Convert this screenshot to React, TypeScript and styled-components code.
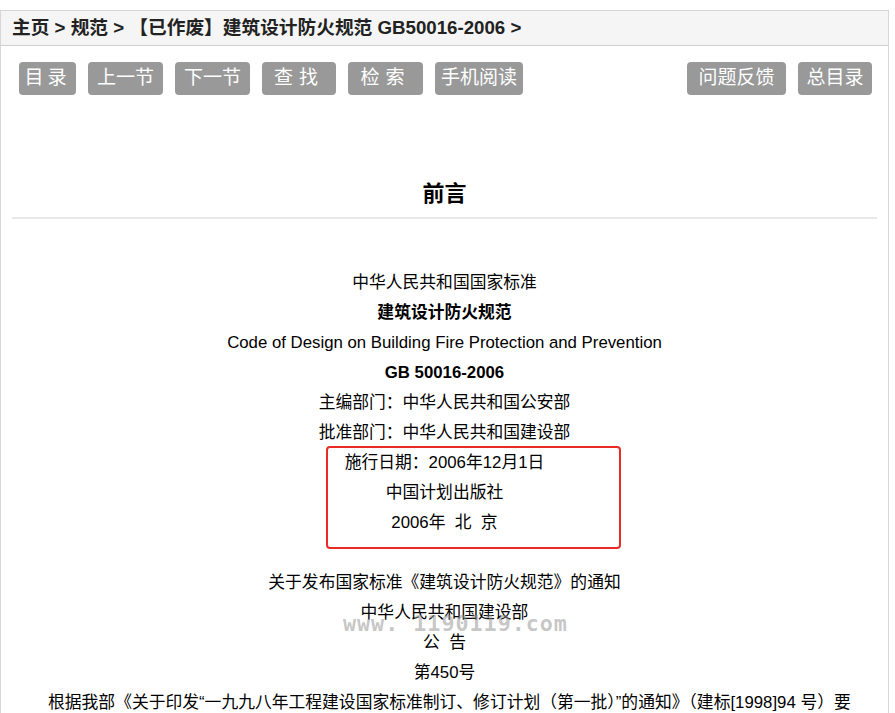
import React from "react";
import styled, { createGlobalStyle } from "styled-components";

const Global = createGlobalStyle`
  html, body { margin: 0; padding: 0; background: #fff; }
  body { font-family: "Liberation Sans", Arial, "Noto Sans CJK SC", sans-serif; color: #000; }
`;

const Page = styled.div`
  width: 887px;
  margin-top: 10px;
  border: 1px solid #d6d6d6;
  border-bottom: none;
  min-height: 710px;
  position: relative;
  overflow: hidden;
`;

const Crumbs = styled.div`
  height: 35px;
  box-sizing: border-box;
  background: #f5f5f5;
  border-bottom: 1px solid #d0d0d0;
  display: flex;
  align-items: center;
  padding: 0 0 0 11px;
  font-size: 18.7px;
  line-height: 20px;
  font-weight: bold;
  color: #222;
`;

const Toolbar = styled.div`
  display: flex;
  padding: 16px 16px 0 18px;
  gap: 12px;
`;

const Spacer = styled.div`
  flex: 1;
`;

const Btn = styled.span<{ $w: number; $ls?: number }>`
  width: ${(p) => p.$w}px;
  height: 33px;
  border-radius: 4px;
  background: #999;
  color: #fff;
  font-size: 19px;
  line-height: 20px;
  padding-bottom: 1px;
  display: flex;
  align-items: center;
  justify-content: center;
  letter-spacing: ${(p) => p.$ls ?? 0}px;
  box-sizing: border-box;
`;

const Title = styled.h1`
  margin: 84px 11px 0;
  text-align: center;
  font-size: 22px;
  font-weight: bold;
  line-height: 30px;
  padding-bottom: 8px;
  border-bottom: 2px solid #e8e8e8;
`;

const Body = styled.div`
  padding: 49px 15px 0;
  font-size: 16.8px;
  position: relative;
`;

const Line = styled.p<{ $bold?: boolean }>`
  margin: 0;
  line-height: 30px;
  text-align: center;
  font-weight: ${(p) => (p.$bold ? "bold" : "normal")};
  white-space: pre;
`;

const Gap = styled.div`
  height: 30px;
`;

const Para = styled.p`
  margin: 0;
  line-height: 30px;
  text-indent: 32px;
`;

const Mark = styled.div`
  position: absolute;
  left: 325px;
  top: 227px;
  width: 291px;
  height: 99px;
  border: 2px solid #ea2a24;
  border-radius: 4px;
`;

const Water = styled.div`
  position: absolute;
  left: 342px;
  top: 392px;
  font-family: "DejaVu Sans Mono", monospace;
  font-weight: bold;
  font-size: 21.7px;
  color: rgba(150, 150, 150, 0.55);
  letter-spacing: 1px;
  white-space: pre;
`;

export default function App() {
  return (
    <>
      <Global />
      <Page>
        <Crumbs>主页 &gt; 规范 &gt; 【已作废】建筑设计防火规范 GB50016-2006 &gt;</Crumbs>
        <Toolbar>
          <Btn $w={57} $ls={4}>目录</Btn>
          <Btn $w={75}>上一节</Btn>
          <Btn $w={75}>下一节</Btn>
          <Btn $w={74} $ls={6}>查找</Btn>
          <Btn $w={75} $ls={6}>检索</Btn>
          <Btn $w={88}>手机阅读</Btn>
          <Spacer />
          <Btn $w={99}>问题反馈</Btn>
          <Btn $w={74}>总目录</Btn>
        </Toolbar>
        <Title>前言</Title>
        <Body>
          <Line>中华人民共和国国家标准</Line>
          <Line $bold>建筑设计防火规范</Line>
          <Line>Code of Design on Building Fire Protection and Prevention</Line>
          <Line $bold>GB 50016-2006</Line>
          <Line>主编部门：中华人民共和国公安部</Line>
          <Line>批准部门：中华人民共和国建设部</Line>
          <Line>施行日期：2006年12月1日</Line>
          <Line>中国计划出版社</Line>
          <Line>2006年  北  京</Line>
          <Gap />
          <Line>关于发布国家标准《建筑设计防火规范》的通知</Line>
          <Line>中华人民共和国建设部</Line>
          <Line>公  告</Line>
          <Line>第450号</Line>
          <Para>
            根据我部《关于印发“一九九八年工程建设国家标准制订、修订计划（第一批）”的通知》（建标[1998]94 号）要求，由公安部会同有关部门共同修订的《建筑设计防火规范》，经有关部门会审，现批准为国家标准。
          </Para>
          <Mark />
          <Water>www. 1190119.com</Water>
        </Body>
      </Page>
    </>
  );
}
